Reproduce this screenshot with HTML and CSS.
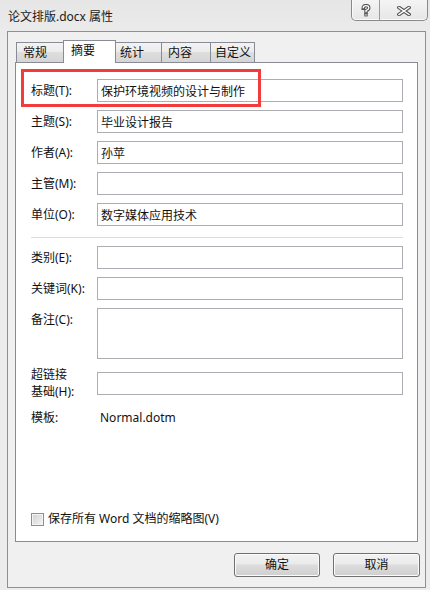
FILE: index.html
```html
<!DOCTYPE html>
<html lang="zh-CN">
<head>
<meta charset="utf-8">
<title>论文排版.docx 属性</title>
<link rel="stylesheet" href="styles.css">
</head>
<body>
<div class="window">
  <div class="titlebar">
    <span class="title">论文排版.docx 属性</span>
    <div class="caption-btns">
      <div class="cbtn help">
        <svg width="10" height="13" viewBox="0 0 10 13">
          <path d="M2.2 4.2 Q2.2 1.6 5 1.6 Q7.8 1.6 7.8 4 Q7.8 5.6 5 6.6 L5 8.2" fill="none" stroke="#555" stroke-width="3.4" stroke-linecap="square"/>
          <rect x="3.3" y="9.4" width="3.4" height="3" fill="#555"/>
          <path d="M2.2 4.2 Q2.2 1.6 5 1.6 Q7.8 1.6 7.8 4 Q7.8 5.6 5 6.6 L5 8.2" fill="none" stroke="#fff" stroke-width="1.3"/>
          <rect x="4.3" y="10.3" width="1.4" height="1.2" fill="#fff"/>
        </svg>
      </div>
      <div class="cbtn close">
        <svg width="14" height="10" viewBox="0 0 14 10">
          <path d="M2 1.5 L12 8.5 M12 1.5 L2 8.5" stroke="#555" stroke-width="3.6" stroke-linecap="square"/>
          <path d="M2 1.5 L12 8.5 M12 1.5 L2 8.5" stroke="#fff" stroke-width="1.4" stroke-linecap="square"/>
        </svg>
      </div>
    </div>
  </div>

  <div class="client">
    <div class="tabs">
      <div class="tab t1">常规</div>
      <div class="tab tab-active t2">摘要</div>
      <div class="tab t3">统计</div>
      <div class="tab t4">内容</div>
      <div class="tab t5">自定义</div>
    </div>

    <div class="panel">
      <div class="highlight"></div>
      <div class="form">
        <label class="lbl">标题(T):</label>
        <input class="field" type="text" value="保护环境视频的设计与制作">
        <label class="lbl">主题(S):</label>
        <input class="field" type="text" value="毕业设计报告">
        <label class="lbl">作者(A):</label>
        <input class="field" type="text" value="孙苹">
        <label class="lbl">主管(M):</label>
        <input class="field" type="text" value="">
        <label class="lbl">单位(O):</label>
        <input class="field" type="text" value="数字媒体应用技术">
        <div class="sep"></div>
        <label class="lbl">类别(E):</label>
        <input class="field" type="text" value="">
        <label class="lbl">关键词(K):</label>
        <input class="field" type="text" value="">
        <label class="lbl lbl-top">备注(C):</label>
        <textarea class="field area"></textarea>
        <label class="lbl lbl-two">超链接<br>基础(H):</label>
        <input class="field" type="text" value="">
        <span class="lbl lbl-plain">模板:</span>
        <span class="value">Normal.dotm</span>
      </div>
      <div class="thumb-row">
        <span class="checkbox"></span>
        <span>保存所有 Word 文档的缩略图(V)</span>
      </div>
    </div>

    <div class="buttons">
      <button class="btn">确定</button>
      <button class="btn btn-wide">取消</button>
    </div>
  </div>
</div>
</body>
</html>
```

FILE: styles.css
```css
* { box-sizing: border-box; }

html, body {
  margin: 0;
  padding: 0;
}

body {
  width: 430px;
  height: 590px;
  overflow: hidden;
  font-family: "Noto Sans", "Noto Sans CJK SC", sans-serif;
  font-size: 12px;
  color: #111;
  background: #e9e9e9;
}

.window {
  width: 430px;
  height: 590px;
  display: flex;
  flex-direction: column;
  background: linear-gradient(#e6e6e6, #ececec 40px, #ececec);
}

.titlebar {
  height: 31px;
  display: flex;
  justify-content: space-between;
  align-items: flex-start;
  flex: none;
}

.title {
  margin-left: 8px;
  margin-top: 9px;
  line-height: 16px;
  font-size: 12px;
  color: #1a1a1a;
}

.caption-btns {
  margin-right: 2px;
  width: 77px;
  height: 21px;
  display: flex;
  border: 1px solid #8a8a8a;
  border-top: none;
  border-radius: 0 0 5px 5px;
  background: linear-gradient(#f4f4f4, #e6e6e6);
  box-shadow: inset 0 -1px 0 #fafafa, inset 1px 0 0 #fafafa;
  overflow: hidden;
}

.cbtn {
  display: flex;
  align-items: center;
  justify-content: center;
}

.help {
  width: 28px;
  border-right: 1px solid #9a9a9a;
  padding-top: 1px;
}

.close {
  flex: 1;
  padding-top: 1px;
}

.client {
  margin-left: 7px;
  width: 419px;
  height: 557px;
  border: 1px solid #8f8f8f;
  background: #f0f0f0;
  display: flex;
  flex-direction: column;
  flex: none;
}

.tabs {
  height: 30px;
  display: flex;
  align-items: flex-end;
  padding-left: 8px;
  flex: none;
}

.tab {
  height: 20px;
  border: 1px solid #898c95;
  border-bottom: none;
  margin-right: -1px;
  background: linear-gradient(#f3f3f3, #ebebeb 50%, #dedede 50%, #d5d5d5);
  line-height: 19px;
  white-space: nowrap;
  color: #111;
}

.t1 { width: 48px; padding-left: 6px; }
.t2 { width: 53px; padding-left: 7px; }
.t3 { width: 47px; padding-left: 4px; }
.t4 { width: 50px; padding-left: 6px; }
.t5 { width: 45px; padding-left: 4px; }

.tab-active {
  height: 23px;
  margin-bottom: -1px;
  background: #fff;
  position: relative;
  z-index: 2;
}

.panel {
  margin-left: 7px;
  width: 403px;
  height: 480px;
  border: 1px solid #898c95;
  background: #fff;
  position: relative;
  display: flex;
  flex-direction: column;
  flex: none;
}

.highlight {
  position: absolute;
  left: 5px;
  top: 6px;
  width: 240px;
  height: 38px;
  border: 3px solid #f23b3b;
  pointer-events: none;
}

.form {
  padding: 16px 14px 0 15px;
  display: grid;
  grid-template-columns: 66px 1fr;
  row-gap: 8px;
  align-items: center;
}

.lbl {
  line-height: 16px;
  white-space: nowrap;
  color: #111;
}

.lbl-top {
  align-self: start;
  line-height: 23px;
}

.lbl-two {
  line-height: 16.5px;
}

.lbl-plain {
  line-height: 20px;
}

.value {
  line-height: 20px;
  padding-left: 3px;
  color: #111;
}

.field {
  width: 100%;
  height: 23px;
  margin: 0;
  border: 1px solid #abadb3;
  border-radius: 0;
  padding: 0 3px;
  font: inherit;
  font-size: 12px;
  line-height: 21px;
  color: #111;
  background: #fff;
  outline: none;
}

.area {
  height: 51px;
  resize: none;
  display: block;
}

.sep {
  grid-column: 1 / -1;
  height: 1px;
  margin-top: 3px;
  background: #d5dfe5;
}

.thumb-row {
  margin-top: auto;
  margin-bottom: 14px;
  padding-left: 15px;
  display: flex;
  align-items: center;
  line-height: 16px;
  color: #111;
}

.checkbox {
  width: 13px;
  height: 13px;
  border: 1px solid #8e8f8f;
  background: linear-gradient(135deg, #cfcfcf, #f6f6f6);
  box-shadow: inset 0 0 0 1px #f4f4f4;
  margin-right: 4px;
  flex: none;
}

.buttons {
  display: flex;
  justify-content: flex-end;
  gap: 13px;
  padding-top: 11px;
  padding-right: 5px;
}

.btn {
  width: 86px;
  height: 24px;
  margin: 0;
  padding: 0;
  border: 1px solid #707070;
  border-radius: 3px;
  background: linear-gradient(#f2f2f2, #ebebeb 45%, #dddddd 50%, #cfcfcf);
  box-shadow: inset 0 0 0 1px #fbfbfb;
  font: inherit;
  font-size: 12px;
  color: #111;
  line-height: 20px;
}

.btn-wide {
  width: 87px;
}
```
